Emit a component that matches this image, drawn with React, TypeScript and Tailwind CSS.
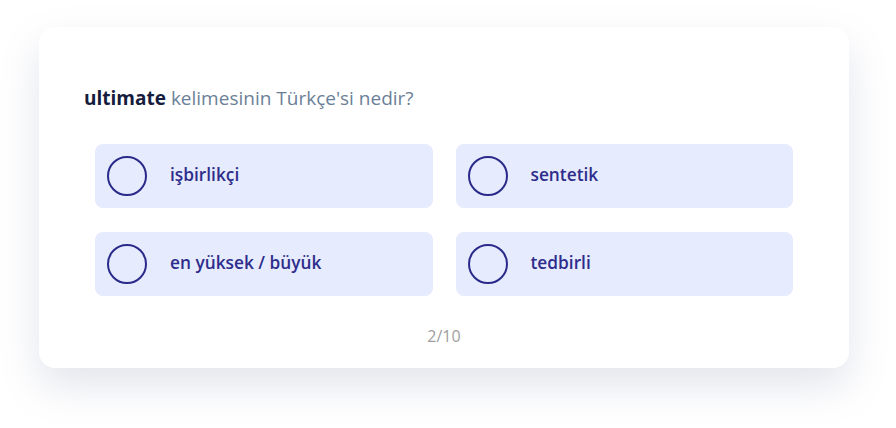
import React from "react";

const options = ["işbirlikçi", "sentetik", "en yüksek / büyük", "tedbirli"];

export default function App() {
  return (
    <div
      className="w-[896px] h-[428px] bg-white pt-[27px] pl-[39px] overflow-hidden"
      style={{ fontFamily: "'Open Sans', Lato, sans-serif" }}
    >
      <div className="w-[810px] h-[341px] bg-white rounded-[16px] shadow-[0_18px_40px_rgba(100,110,150,0.18)] flex flex-col">
        <div className="pl-[45px] pt-[59px] text-[19px] leading-[24px]">
          <span className="font-bold text-[#161c3d]">ultimate</span>{" "}
          <span className="text-[#6b7f98]">kelimesinin Türkçe'si nedir?</span>
        </div>
        <div className="grid grid-cols-2 gap-x-[23px] gap-y-[24px] px-[56px] mt-[34px]">
          {options.map((o) => (
            <button
              key={o}
              className="h-[64px] rounded-[8px] bg-[#e6ebfd] flex items-center pl-[12px] text-left"
            >
              <span className="w-[40px] h-[40px] rounded-full border-2 border-[#2a2a8a] shrink-0" />
              <span className="ml-[23px] text-[17.3px] font-semibold text-[#2e2d8c] leading-[20px] -translate-y-[1px]">{o}</span>
            </button>
          ))}
        </div>
        <div className="mt-[30px] text-center text-[16px] text-[#a0a0a0] leading-[20px]">2/10</div>
      </div>
    </div>
  );
}
